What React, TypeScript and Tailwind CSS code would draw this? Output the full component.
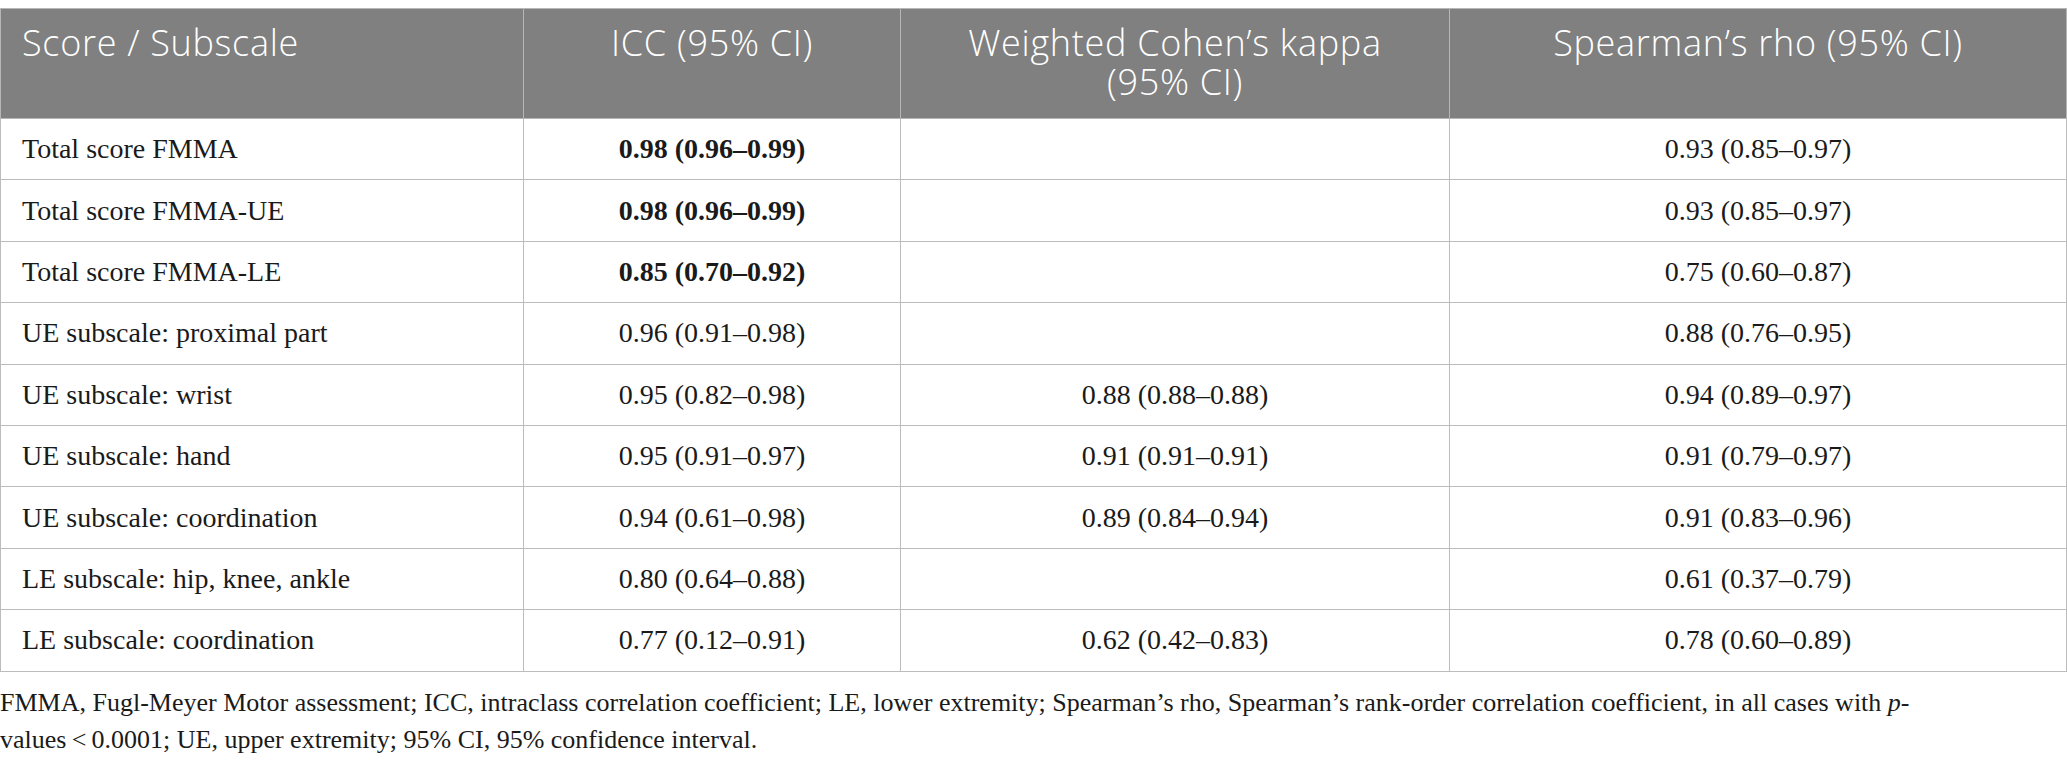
import React from "react";

type Row = { label: string; icc: string; bold?: boolean; kappa: string; rho: string };

const rows: Row[] = [
  { label: "Total score FMMA", icc: "0.98 (0.96–0.99)", bold: true, kappa: "", rho: "0.93 (0.85–0.97)" },
  { label: "Total score FMMA-UE", icc: "0.98 (0.96–0.99)", bold: true, kappa: "", rho: "0.93 (0.85–0.97)" },
  { label: "Total score FMMA-LE", icc: "0.85 (0.70–0.92)", bold: true, kappa: "", rho: "0.75 (0.60–0.87)" },
  { label: "UE subscale: proximal part", icc: "0.96 (0.91–0.98)", kappa: "", rho: "0.88 (0.76–0.95)" },
  { label: "UE subscale: wrist", icc: "0.95 (0.82–0.98)", kappa: "0.88 (0.88–0.88)", rho: "0.94 (0.89–0.97)" },
  { label: "UE subscale: hand", icc: "0.95 (0.91–0.97)", kappa: "0.91 (0.91–0.91)", rho: "0.91 (0.79–0.97)" },
  { label: "UE subscale: coordination", icc: "0.94 (0.61–0.98)", kappa: "0.89 (0.84–0.94)", rho: "0.91 (0.83–0.96)" },
  { label: "LE subscale: hip, knee, ankle", icc: "0.80 (0.64–0.88)", kappa: "", rho: "0.61 (0.37–0.79)" },
  { label: "LE subscale: coordination", icc: "0.77 (0.12–0.91)", kappa: "0.62 (0.42–0.83)", rho: "0.78 (0.60–0.89)" },
];

const serif = "font-['Liberation_Serif','Times_New_Roman',serif]";
const sans = "font-['Open_Sans','Noto_Sans',sans-serif]";

export default function App() {
  return (
    <div className="w-[2067px] h-[765px] bg-white overflow-hidden pt-[8px]">
      <table className="w-[2067px] border-collapse table-fixed">
        <colgroup>
          <col className="w-[523px]" />
          <col className="w-[377px]" />
          <col className="w-[549px]" />
          <col />
        </colgroup>
        <thead>
          <tr className={`h-[110px] bg-[#7f807f] text-white ${sans} text-[36px] leading-[39px] font-light tracking-[0.7px]`}>
            <th className="border border-[#b5b6b5] align-top text-left font-light pl-[21px] pt-[14px]">Score / Subscale</th>
            <th className="border border-[#b5b6b5] align-top text-center font-light pt-[14px]">ICC (95% CI)</th>
            <th className="border border-[#b5b6b5] align-top text-center font-light pt-[14px]">
              <div className="h-[39px] leading-[39px]">Weighted Cohen’s kappa</div>
              <div className="h-[39px] leading-[39px]">(95% CI)</div>
            </th>
            <th className="border border-[#b5b6b5] align-top text-center font-light pt-[14px]">Spearman’s rho (95% CI)</th>
          </tr>
        </thead>
        <tbody className={`${serif} text-[28px] text-[#1a1a1a]`}>
          {rows.map((r) => (
            <tr key={r.label} className="h-[61.4px]">
              <td className="border border-[#bcbcbc] pl-[21px] align-middle">{r.label}</td>
              <td className={`border border-[#bcbcbc] text-center align-middle ${r.bold ? "font-bold" : ""}`}>{r.icc}</td>
              <td className="border border-[#bcbcbc] text-center align-middle">{r.kappa}</td>
              <td className="border border-[#bcbcbc] text-center align-middle">{r.rho}</td>
            </tr>
          ))}
        </tbody>
      </table>
      <div className={`${serif} text-[26px] leading-[37px] text-[#1a1a1a] pt-[12px]`}>
        <div className="whitespace-nowrap">
          FMMA, Fugl-Meyer Motor assessment; ICC, intraclass correlation coefficient; LE, lower extremity; Spearman’s rho, Spearman’s rank-order correlation coefficient, in all cases with <i>p</i>-
        </div>
        <div className="whitespace-nowrap">values{"\u2009"}&lt;{"\u2009"}0.0001; UE, upper extremity; 95% CI, 95% confidence interval.</div>
      </div>
    </div>
  );
}
